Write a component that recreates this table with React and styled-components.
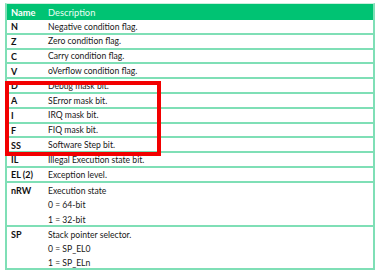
import React from "react";
import styled, { createGlobalStyle } from "styled-components";

const Global = createGlobalStyle`
  html, body { margin: 0; padding: 0; background: #ffffff; }
  body { font-family: Lato, "Liberation Sans", sans-serif; }
`;

const Page = styled.div`
  position: relative;
  width: 379px;
  height: 272px;
  padding: 3px 4px 0 5px;
  box-sizing: border-box;
`;

const Table = styled.div`
  width: 370px;
  border: 2px solid #7fdfb6;
  border-top: 1px solid #c9f0de;
  box-sizing: border-box;
  display: flex;
  flex-direction: column;
`;

const Row = styled.div`
  display: grid;
  grid-template-columns: 41px 1fr;
  height: ${(p) => p.$h}px;
  box-sizing: border-box;
  border-bottom: ${(p) => (p.$last ? "none" : "2px solid #7fdfb6")};
  align-items: ${(p) => (p.$multi ? "start" : "center")};
  padding-top: ${(p) => (p.$multi ? "1px" : "0.5px")};
`;

const HeaderRow = styled.div`
  display: grid;
  grid-template-columns: 41px 1fr;
  height: 16px;
  background: #00c373;
  align-items: center;
  color: #ffffff;
`;

const HeadName = styled.div`
  font-weight: 700;
  font-size: 9.3px;
  padding-left: 4px;
`;

const HeadDesc = styled.div`
  font-size: 9.3px;
  color: #eafff5;
`;

const Name = styled.div`
  font-weight: 700;
  font-size: 9px;
  color: #111;
  padding-left: 4px;
  line-height: ${(p) => (p.$lh ? `${p.$lh}px` : "normal")};
`;

const Desc = styled.div`
  font-size: 8.6px;
  color: #181818;
  display: flex;
  flex-direction: column;
`;

const Line = styled.div`
  line-height: ${(p) => p.$lh}px;
`;

const Highlight = styled.div`
  position: absolute;
  left: 5px;
  top: 81px;
  width: 156px;
  height: 75px;
  border: 4px solid #f20000;
  box-sizing: border-box;
  pointer-events: none;
`;

const single = [
  ["N", "Negative condition flag."],
  ["Z", "Zero condition flag."],
  ["C", "Carry condition flag."],
  ["V", "oVerflow condition flag."],
  ["D", "Debug mask bit."],
  ["A", "SError mask bit."],
  ["I", "IRQ mask bit."],
  ["F", "FIQ mask bit."],
  ["SS", "Software Step bit."],
  ["IL", "Illegal Execution state bit."],
  ["EL (2)", "Exception level."],
];

const multi = [
  { name: "nRW", lines: ["Execution state", "0 = 64-bit", "1 = 32-bit"], h: 44.2, lh: 14.5 },
  { name: "SP", lines: ["Stack pointer selector.", "0 = SP_EL0", "1 = SP_ELn"], h: 41, lh: 14, last: true },
];

export default function App() {
  return (
    <Page>
      <Global />
      <Table>
        <HeaderRow>
          <HeadName>Name</HeadName>
          <HeadDesc>Description</HeadDesc>
        </HeaderRow>
        {single.map(([n, d]) => (
          <Row key={n} $h={14.8}>
            <Name>{n}</Name>
            <Desc>{d}</Desc>
          </Row>
        ))}
        {multi.map((m) => (
          <Row key={m.name} $h={m.h} $multi $last={m.last}>
            <Name $lh={m.lh}>{m.name}</Name>
            <Desc>
              {m.lines.map((l) => (
                <Line key={l} $lh={m.lh}>{l}</Line>
              ))}
            </Desc>
          </Row>
        ))}
      </Table>
      <Highlight />
    </Page>
  );
}
